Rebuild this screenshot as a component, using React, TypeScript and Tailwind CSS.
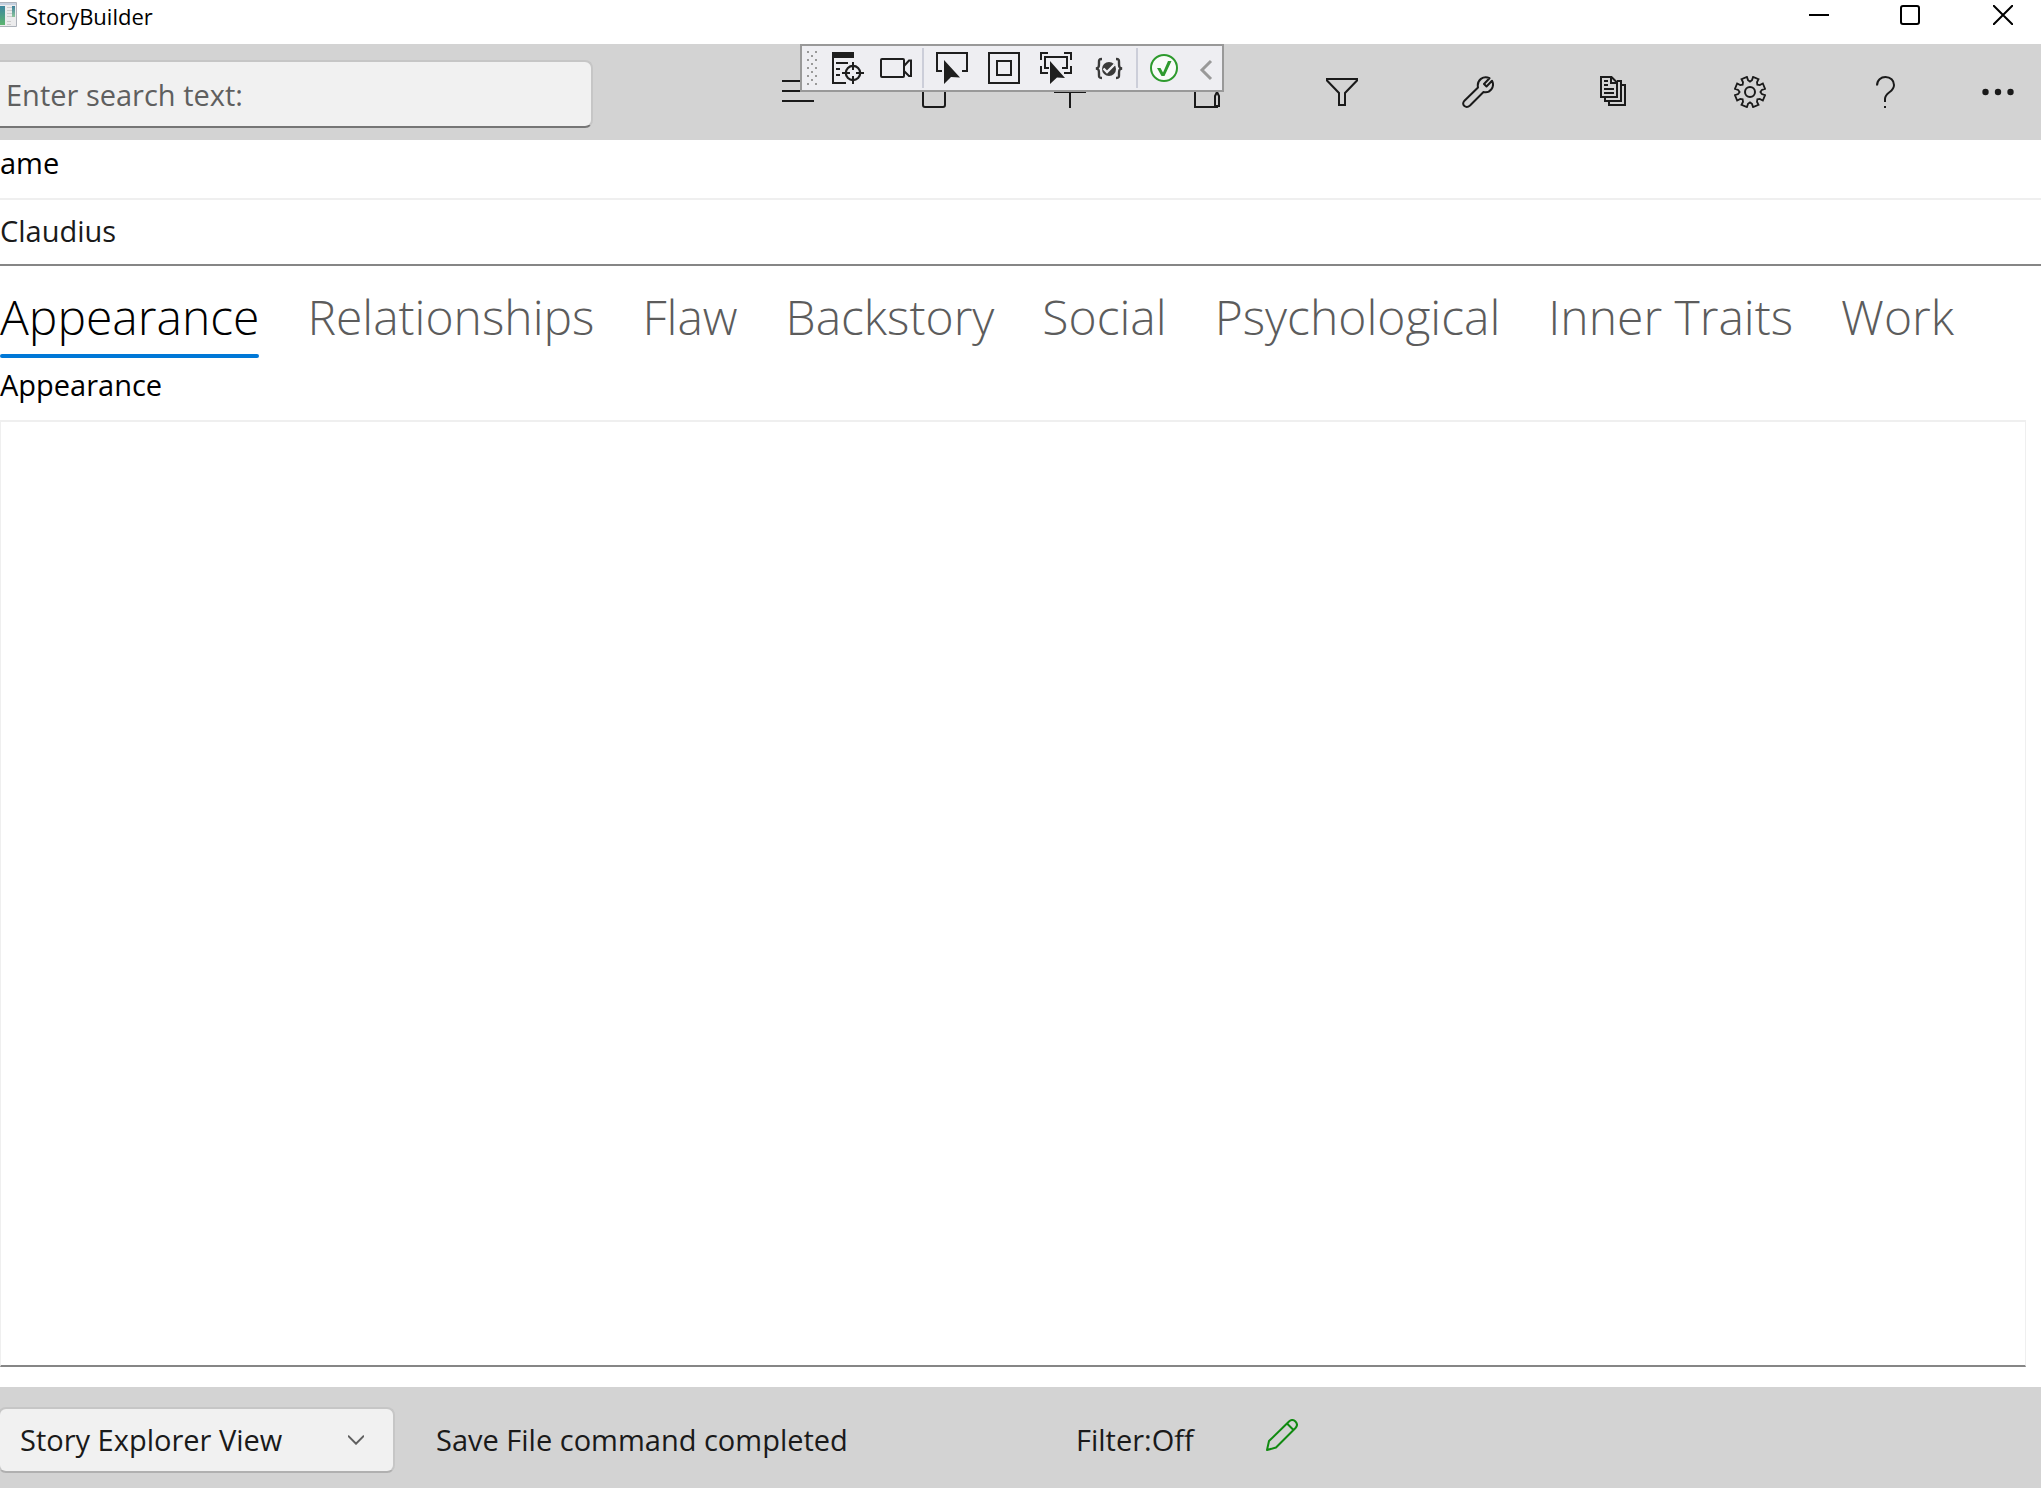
import type { ReactNode } from "react";

const stroke = { fill: "none", stroke: "currentColor", strokeWidth: 2 } as const;

function gearPath() {
  const pts: string[] = [];
  for (let i = 0; i < 8; i++) {
    const base = (i * 45 * Math.PI) / 180 - Math.PI / 2 + Math.PI / 8;
    const at = (r: number, deg: number) => {
      const a = base + (deg * Math.PI) / 180;
      return `${(16 + r * Math.cos(a)).toFixed(2)} ${(16 + r * Math.sin(a)).toFixed(2)}`;
    };
    pts.push(at(12, -13), at(15.4, -11), at(15.4, 11), at(12, 13), at(10.4, 22.5));
  }
  return `M${pts.join("L")}Z`;
}

function Icon({ children }: { children: ReactNode }) {
  return (
    <svg viewBox="0 0 32 32" className="size-8 shrink-0" aria-hidden="true">
      {children}
    </svg>
  );
}

const commands: { label: string; icon: ReactNode }[] = [
  { label: "Menu", icon: <path {...stroke} d="M0 5H32M0 15H32M0 25H32" /> },
  { label: "File", icon: <path {...stroke} d="M5 1H27V29Q27 31 25 31H7Q5 31 5 29Z" /> },
  { label: "Add", icon: <path {...stroke} d="M0 16H32M16 0V32" /> },
  {
    label: "Edit",
    icon: (
      <>
        <path {...stroke} d="M24 1H5V31H28" />
        <path {...stroke} d="M25 30V20L27 16L29 20V30Z" />
      </>
    ),
  },
  { label: "Filter", icon: <path {...stroke} d="M1 3H31V4.500L19 17V29H13V17L1 4.500Z" /> },
  {
    label: "Tools",
    icon: (
      <path
        {...stroke}
        strokeLinejoin="round"
        d="M27.500 2.200C21.500 -0.800 14.500 4 16 11.500L2.200 25C-1 29 4 33 8 29.500L21.500 16C28.500 17.500 33 10.500 30 4.800L24.500 10.500L22 8Z"
      />
    ),
  },
  {
    label: "Reports",
    icon: (
      <>
        <path {...stroke} d="M3 1H13.500L19 6.500V21H3Z M13 1V7H19M6 5H10M6 9H10M6 13H16M6 17H16" />
        <path {...stroke} d="M19 5H23V25H7V21M23 9H27V29H11V25" />
      </>
    ),
  },
  {
    label: "Settings",
    icon: (
      <>
        <path {...stroke} strokeWidth={1.8} d={gearPath()} />
        <circle {...stroke} cx="16" cy="16" r="5" />
      </>
    ),
  },
  {
    label: "Help",
    icon: (
      <>
        <path {...stroke} d="M7 9.500C7 4 11 1 15.500 1C20.500 1 24 4.500 24 9C24 16.500 15 16 15 23V26" />
        <path fill="currentColor" d="M14 30h2v2h-2z" />
      </>
    ),
  },
];

const tabs = ["Appearance", "Relationships", "Flaw", "Backstory", "Social", "Psychological", "Inner Traits", "Work"];

const gripDots = Array.from({ length: 9 }, (_, r) => (r % 2 ? [4] : [0, 8]).map((x) => ({ x, y: r * 4 }))).flat();

function DebugButton({ label, className = "", children }: { label: string; className?: string; children: ReactNode }) {
  return (
    <button type="button" aria-label={label} className={`flex shrink-0 items-center justify-center ${className}`}>
      {children}
    </button>
  );
}

function DebugToolbar() {
  return (
    <div
      role="toolbar"
      aria-label="Debug"
      className="absolute top-0 left-[800px] flex h-12 w-[424px] items-center border-2 border-[#999999] bg-[#eeeef2] text-[#1e1e1e]"
    >
      <svg viewBox="0 0 10 34" className="ml-[5px] h-[34px] w-[10px] shrink-0" aria-hidden="true">
        {gripDots.map((d) => (
          <rect key={`${d.x}-${d.y}`} x={d.x} y={d.y} width="2" height="2" fill="#999999" />
        ))}
      </svg>
      <DebugButton label="Go to live visual tree" className="ml-[15px]">
        <Icon>
          <path fill="currentColor" d="M0 0H22V6H0Z" />
          <path {...stroke} d="M1 6V31H14M4 11H16M4 17H8M4 23H8" />
          <circle {...stroke} strokeWidth={2.2} cx="21" cy="21" r="7.200" />
          <path {...stroke} d="M21 10V18M21 24V32M10 21H18M24 21H32" />
        </Icon>
      </DebugButton>
      <DebugButton label="Record" className="ml-4">
        <Icon>
          <rect {...stroke} x="1" y="7" width="23" height="18" rx="1" />
          <path {...stroke} d="M24 14L29 8.500H31V24H29L24 19" />
        </Icon>
      </DebugButton>
      <span className="ml-[10px] h-10 w-0.5 shrink-0 bg-[#ccced9]" />
      <DebugButton label="Select element" className="ml-3">
        <Icon>
          <path {...stroke} d="M6 19H1V1H31V19H26" />
          <path fill="currentColor" d="M8 8L24 25.500L15 25L8 32Z" />
        </Icon>
      </DebugButton>
      <DebugButton label="Display layout adorners" className="ml-5">
        <Icon>
          <rect {...stroke} x="1" y="1" width="30" height="30" />
          <rect {...stroke} x="9" y="9" width="14" height="14" />
        </Icon>
      </DebugButton>
      <DebugButton label="Track focused element" className="ml-5">
        <Icon>
          <path {...stroke} d="M1 8V1H8M24 1H31V8M31 14V21H24M8 21H1V14" />
          <path {...stroke} d="M9 16H5V5H27V16H22" />
          <path fill="currentColor" d="M10 9L25 26L17 25.500L10 32Z" />
        </Icon>
      </DebugButton>
      <DebugButton label="Hot reload" className="ml-5">
        <Icon>
          <g className="text-[#3a3a3a]">
            <path
              {...stroke}
              strokeWidth={2.4}
              d="M10 7C6.500 7 7 8.500 7 11C7 14.500 7 16 4 16.500C7 17 7 18.500 7 22C7 24.500 6.500 26 10 26M24 7C27.500 7 27 8.500 27 11C27 14.500 27 16 30 16.500C27 17 27 18.500 27 22C27 24.500 27.500 26 24 26"
            />
            <circle fill="currentColor" cx="17" cy="17" r="7" />
            <path {...stroke} stroke="#eeeef2" strokeWidth={2.4} d="M11.500 16.500L15 20L22.500 12.500" />
          </g>
        </Icon>
      </DebugButton>
      <span className="ml-3 h-10 w-0.5 shrink-0 bg-[#ccced9]" />
      <DebugButton label="Hot reload available" className="ml-[10px] text-[#2d9a2d]">
        <Icon>
          <circle cx="16" cy="16" r="13" fill="#f8fbf8" stroke="currentColor" strokeWidth="2" />
          <path fill="currentColor" d="M9 16H12.500L15 20.500L20 9H23.500L16.500 24H13.500Z" />
        </Icon>
      </DebugButton>
      <DebugButton label="Collapse toolbar" className="ml-2 text-[#999999]">
        <Icon>
          <path {...stroke} strokeWidth={3} d="M23 9L14 18L23 27" />
        </Icon>
      </DebugButton>
    </div>
  );
}

export default function App() {
  return (
    <div className="flex min-h-screen flex-col overflow-hidden bg-white font-['Open_Sans',sans-serif] text-[29px] text-black">
      <header className="flex h-11 items-center justify-between">
        <div className="flex items-start gap-2 pb-3">
          <svg viewBox="0 0 18 26" className="mt-0.5 h-[26px] w-[18px]" aria-hidden="true">
            <defs>
              <linearGradient id="pane" x1="0" y1="0" x2="0" y2="1">
                <stop offset="0" stopColor="#3d86a0" />
                <stop offset="1" stopColor="#5cb56f" />
              </linearGradient>
              <linearGradient id="paneSmall" x1="0" y1="0" x2="0" y2="1">
                <stop offset="0" stopColor="#3d7f9c" />
                <stop offset="1" stopColor="#8cc79a" />
              </linearGradient>
            </defs>
            <path d="M-2 0.500H16.500V24.500H-2Z" fill="#ececed" stroke="#aeb3bb" />
            <path d="M0 1H16V3H0Z" fill="#c5d0df" />
            <path d="M0 4H5V23H0Z" fill="url(#pane)" />
            <path d="M7 5.500h5M7 8.500h5M7 11.500h5M7 14.500h5M7 19.500h4M7 22.500h4" stroke="#cccccc" />
            <path d="M12 4H15V15H12Z" fill="url(#paneSmall)" />
          </svg>
          <h1 className="text-[22px] leading-8">StoryBuilder</h1>
        </div>
        <div className="flex pb-[14px]">
          <button type="button" aria-label="Minimize" className="flex w-[92px] justify-center">
            <svg viewBox="0 0 20 20" className="size-5"><path {...stroke} d="M0 10H20" /></svg>
          </button>
          <button type="button" aria-label="Maximize" className="flex w-[90px] justify-center">
            <svg viewBox="0 0 20 20" className="size-5"><rect {...stroke} x="1" y="1" width="18" height="18" rx="2" /></svg>
          </button>
          <button type="button" aria-label="Close" className="flex w-[86px] justify-center pl-[10px]">
            <svg viewBox="0 0 20 20" className="size-5"><path {...stroke} d="M0 0L20 20M20 0L0 20" /></svg>
          </button>
        </div>
      </header>

      <div className="relative flex h-24 items-center justify-between bg-[#d3d3d3]">
        <input
          type="text"
          aria-label="Search"
          placeholder="Enter search text:"
          className="mb-3 h-[68px] w-[593px] self-end rounded-r-lg border-2 border-l-0 border-[#c6c6c6] border-b-[#767676] bg-[#f1f1f1] pr-4 pl-[6px] outline-none placeholder:text-[#5f5f5f]"
        />
        <nav aria-label="Commands" className="flex text-[#1a1a1a]">
          {commands.map((c) => (
            <button key={c.label} type="button" aria-label={c.label} className="flex w-[136px] justify-center">
              <Icon>{c.icon}</Icon>
            </button>
          ))}
          <button type="button" aria-label="More" className="flex w-[87px] justify-center">
            <Icon>
              <g fill="currentColor">
                <circle cx="3.500" cy="16" r="3.200" />
                <circle cx="16" cy="16" r="3.200" />
                <circle cx="28.500" cy="16" r="3.200" />
              </g>
            </Icon>
          </button>
        </nav>
        <DebugToolbar />
      </div>

      <main className="flex flex-1 flex-col">
        <label htmlFor="name" className="flex h-[58px] items-center pb-3">
          ame
        </label>
        <input
          id="name"
          type="text"
          defaultValue="Claudius"
          className="h-[68px] w-full border-t-2 border-b-2 border-t-[#efefef] border-b-[#868686] pb-1 text-[#1a1a1a] outline-none"
        />
        <div role="tablist" className="flex h-[94px] items-end gap-12 pb-0.5 text-[48px] leading-[74px] font-light text-[#5c5c5c]">
          {tabs.map((t, i) => (
            <button
              key={t}
              type="button"
              role="tab"
              aria-selected={i === 0}
              className="flex flex-col whitespace-nowrap after:h-1 after:rounded-full aria-selected:text-black aria-selected:after:bg-[#0078d7]"
            >
              {t}
            </button>
          ))}
        </div>
        <label htmlFor="appearance" className="flex h-[60px] items-center pb-[10px]">
          Appearance
        </label>
        <textarea
          id="appearance"
          className="mr-[15px] mb-5 flex-1 resize-none border-2 border-x border-[#efefef] border-b-[#868686] px-2 outline-none"
        />
      </main>

      <footer className="flex h-[101px] items-center bg-[#d3d3d3] pt-1 text-[#1a1a1a]">
        <div className="relative -ml-0.5 w-[397px]">
          <select
            aria-label="View"
            className="h-[66px] w-full appearance-none rounded-lg border-2 border-[#c6c6c6] border-b-[#b0b0b0] bg-[#f1f1f1] pl-5 outline-none"
          >
            <option>Story Explorer View</option>
          </select>
          <svg viewBox="0 0 16 10" className="pointer-events-none absolute top-7 right-[31px] h-[10px] w-4 text-[#5f5f5f]" aria-hidden="true">
            <path {...stroke} d="M0 0.700L8 8.700L16 0.700" />
          </svg>
        </div>
        <p className="ml-[41px] w-[640px]">Save File command completed</p>
        <p className="w-[190px]">Filter:Off</p>
        <button type="button" aria-label="Edit status" className="mb-[10px] text-[#108a10]">
          <Icon>
            <path {...stroke} strokeLinejoin="round" d="M1 31L3 22L23 2.500C27.500 -1.500 33.500 4.500 29.500 9L10 28.500ZM21 4.500L27.500 11" />
          </Icon>
        </button>
      </footer>
    </div>
  );
}
